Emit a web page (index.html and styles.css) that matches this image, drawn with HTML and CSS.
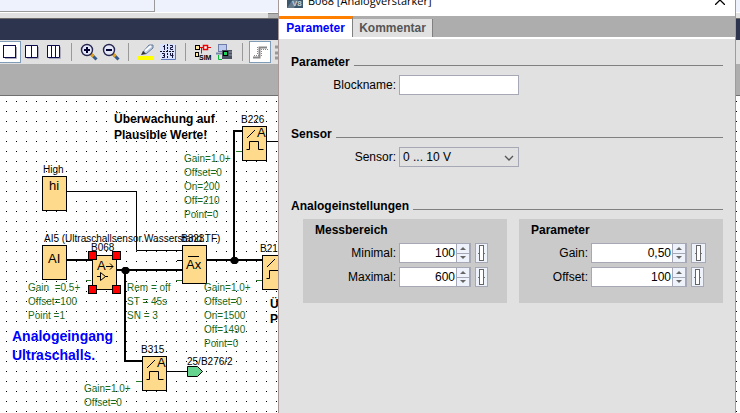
FILE: index.html
```
<!DOCTYPE html>
<html lang="de">
<head>
  <meta charset="UTF-8">
  <title>B068 [Analogverstärker]</title>
  <link rel="stylesheet" href="styles.css">
</head>
<body>
  <div class="app">
    <div class="top-pane"><div class="top-box"></div></div>
    <div class="splitter"><span></span></div>
    <div class="title-strip"></div>
    <div class="toolbar">
      <button class="tool active" aria-label="Ein Fenster">
        <svg width="20" height="20"><path d="M16.5 5v11.5H5" fill="none" stroke="#aab"/><rect x="3.5" y="3.5" width="12" height="12" fill="#fff" stroke="#0b0b4d"/></svg>
      </button>
      <button class="tool" aria-label="Zwei Fenster">
        <svg width="20" height="20"><path d="M16.5 5v11.5H5" fill="none" stroke="#aab"/><path d="M3.5 3.5h12v12h-12zM9.5 3.5v12" fill="#fff" stroke="#0b0b4d"/></svg>
      </button>
      <button class="tool" aria-label="Drei Fenster">
        <svg width="20" height="20"><path d="M16.5 5v11.5H5" fill="none" stroke="#aab"/><path d="M3.5 3.5h12v12h-12zM7.5 3.5v12M11.5 3.5v12" fill="#fff" stroke="#0b0b4d"/></svg>
      </button>
      <span class="sep"></span>
      <button class="tool" aria-label="Vergrößern">
        <svg width="20" height="20"><path d="M12.5 12.5l5 5" stroke="#345a8c" stroke-width="3"/><path d="M11.5 11.5l3 3" stroke="#e0a020" stroke-width="3"/><circle cx="8" cy="8" r="5.5" fill="#e4e8f8" stroke="#25254f" stroke-width="1.4"/><path d="M8 5v6M5 8h6" stroke="#000030" stroke-width="2"/></svg>
      </button>
      <button class="tool" aria-label="Verkleinern">
        <svg width="20" height="20"><path d="M12.5 12.5l5 5" stroke="#345a8c" stroke-width="3"/><path d="M11.5 11.5l3 3" stroke="#e0a020" stroke-width="3"/><circle cx="8" cy="8" r="5.5" fill="#e4e8f8" stroke="#25254f" stroke-width="1.4"/><path d="M5 8h6" stroke="#000030" stroke-width="2"/></svg>
      </button>
      <span class="sep"></span>
      <button class="tool" aria-label="Markieren">
        <svg width="20" height="20"><rect x="2" y="14" width="16" height="4" fill="#ff0"/><path d="M7 10l6-7h4v3l-7 6z" fill="#b9c8e2" stroke="#667b9b"/><path d="M9 9l6-5" stroke="#fff" stroke-width="2"/><path d="M5 13l2-4 3 3z" fill="#333"/></svg>
      </button>
      <button class="tool" aria-label="Seitenlayout">
        <svg width="20" height="20"><rect x="2" y="2" width="15" height="15" fill="#dbe4ff"/><path d="M17.5 3v14.5H3" fill="none" stroke="#5b76b8"/><path d="M9.5 2v15M2 9.5h15" stroke="#112" stroke-dasharray="2 1"/><path d="M6.5 3v5M5 4.5h1M12 3.5h2.5v2H12.5v2H15M4 11.5h2.5v4H4M5 13.5h2M12.5 11v2.5h3M14.5 11v5" fill="none" stroke="#15153c"/></svg>
      </button>
      <span class="sep"></span>
      <button class="tool" aria-label="Simulation">
        <svg width="20" height="20"><path d="M7 5.5h4M15 5.5h3M8.5 5.5v6" fill="none" stroke="#e00"/><rect x="2.5" y="3.5" width="4" height="4" fill="#ffe9a0" stroke="#000"/><rect x="10.5" y="3.5" width="4" height="4" fill="#fff" stroke="#e00" stroke-width="1.5"/><rect x="2.5" y="10.5" width="3" height="4" fill="#ffe9a0" stroke="#000"/><text x="6" y="18" class="sim">SIM</text></svg>
      </button>
      <button class="tool" aria-label="Übertragen">
        <svg width="20" height="20"><rect x="3.5" y="2.5" width="8" height="7" fill="#bccbed" stroke="#6e7ca6"/><path d="M1 11.5h11" stroke="#7684a8" stroke-width="2"/><path d="M3.5 13v4.5H7" fill="none" stroke="#0b3"/><rect x="7" y="8" width="10" height="9" fill="#495161"/><rect x="8.5" y="9.5" width="4" height="4" fill="#1fd45a" stroke="#000"/><path d="M14 10h3M14 13h3" stroke="#909aaa"/></svg>
      </button>
      <span class="sep"></span>
      <button class="tool active" aria-label="Signalverlauf">
        <svg width="20" height="20"><path d="M3 15.5h6.5v-10H17" fill="none" stroke="#888" stroke-width="2"/><path d="M4 13.5h5M11 7.5h7M7.5 5v8M11.5 7v8" stroke="#888" stroke-dasharray="1 1"/></svg>
      </button>
      <button class="tool" aria-label="Liste">
        <svg width="20" height="20"><path d="M3 5h10M3 11h10M3 16h10" stroke="#999" stroke-width="3"/></svg>
      </button>
    </div>
    <div class="ruler"></div>

    <div class="canvas">
      <svg class="diagram" role="img" aria-label="Funktionsplan">
        <g transform="translate(0 -96)">
          <!-- Leitungen -->
          <path class="wire" d="M66 191.5H136.5V250.5H182M177 260.5H182M266 141.5H290M166 371.5H188"/>
          <path class="wire thick" d="M66 260H92M116 270H182M125 270V361H142M206 260H262M234 260V131H242"/>
          <path class="tick" d="M86 280.5H91M236 151.5H242M176 280.5H182M256 280.5H262M136 381.5H142"/>
          <path class="node" d="M123.5 267h4l2 2v3l-2 2h-4l-2-2v-3zM232.5 257h4l2 2v3l-2 2h-4l-2-2v-3z"/>

          <!-- Blöcke -->
          <g class="block">
            <rect x="42.5" y="176.5" width="24" height="34"/>
            <rect x="42.5" y="245.5" width="24" height="34"/>
            <rect x="92.5" y="255.5" width="24" height="34"/>
            <rect x="182.5" y="245.5" width="24" height="38"/>
            <rect x="242.5" y="126.5" width="24" height="34"/>
            <rect x="262.5" y="255.5" width="24" height="34"/>
            <rect x="142.5" y="356.5" width="24" height="34"/>
          </g>
          <g class="symbol">
            <path d="M246.5 149.5h3v-8h9v8h5M247 138l8-8"/>
            <path d="M266.5 278.5h3v-8h9v8h5M267 267l8-8"/>
            <path d="M146.5 379.5h3v-8h9v8h5M147 368l8-8"/>
            <path d="M188 256.5h11"/>
            <path d="M106 266.5h7M110 263.5l3 3-3 3M97 276.5h3M100.5 272.5v8l5-4zM105 276.5h3"/>
          </g>
          <g class="glyph">
            <text x="49" y="190">hi</text>
            <text x="48" y="263">AI</text>
            <text x="97" y="270">A</text>
            <text x="186" y="269">Ax</text>
            <text x="257" y="137">A</text>
            <text x="157" y="367">A</text>
          </g>
          <path class="connector" d="M187.5 366.5h10l5 5-5 5h-10z"/>

          <!-- Beschriftung -->
          <g class="label">
            <text x="43" y="173">High</text>
            <text x="241" y="123">B226</text>
            <text x="44" y="242">AI5 (Ultraschallsensor.Wasserstand.TF)</text>
            <text x="91" y="251">B068</text>
            <text x="181" y="242">B323</text>
            <text x="260" y="252">B21</text>
            <text x="141" y="353">B315</text>
            <text x="187" y="365">25/B276/2</text>
          </g>
          <g class="param">
            <text><tspan x="184" y="162">Gain=1.0+</tspan><tspan x="184" y="176">Offset=0</tspan><tspan x="184" y="190">On=200</tspan><tspan x="184" y="204">Off=210</tspan><tspan x="184" y="218">Point=0</tspan></text>
            <text><tspan x="28" y="291">Gain&#160; =0.5+</tspan><tspan x="28" y="305">Offset=100</tspan><tspan x="28" y="319">Point =1</tspan></text>
            <text><tspan x="127" y="291">Rem = off</tspan><tspan x="127" y="305">ST = 45s</tspan><tspan x="127" y="319">SN = 3</tspan></text>
            <text><tspan x="204" y="291">Gain=1.0+</tspan><tspan x="204" y="305">Offset=0</tspan><tspan x="204" y="319">On=1500</tspan><tspan x="204" y="333">Off=1490</tspan><tspan x="204" y="347">Point=0</tspan></text>
            <text><tspan x="84" y="392">Gain=1.0+</tspan><tspan x="84" y="406">Offset=0</tspan></text>
          </g>
          <text class="note"><tspan x="114" y="123">Überwachung auf</tspan><tspan x="114" y="139">Plausible Werte!</tspan></text>
          <text class="note"><tspan x="270" y="308">Ü</tspan><tspan x="270" y="323">P</tspan></text>
          <text class="note blue"><tspan x="12" y="341">Analogeingang</tspan><tspan x="12" y="360">Ultraschalls.</tspan></text>

          <!-- Auswahl -->
          <g class="handle">
            <rect x="88.5" y="251.5" width="8" height="8"/>
            <rect x="112.5" y="251.5" width="8" height="8"/>
            <rect x="88.5" y="285.5" width="8" height="8"/>
            <rect x="112.5" y="285.5" width="8" height="8"/>
          </g>
        </g>
      </svg>
    </div>
  </div>

  <form class="dialog">
    <div class="dialog-title">
      <svg class="dialog-icon" width="16" height="16"><rect width="16" height="16" fill="#3c566c"/><path d="M0 16L8 4l3 4-4 8z" fill="#64798a"/><text x="5" y="14" class="logo">V8</text></svg>
      <span>B068 [Analogverstärker]</span>
      <button type="button" class="close" aria-label="Schließen">
        <svg width="10" height="10"><path d="M0 0l10 10M10 0L0 10" stroke="#000" stroke-width="1.3"/></svg>
      </button>
    </div>
    <div class="tabs">
      <button type="button" class="tab selected">Parameter</button>
      <button type="button" class="tab">Kommentar</button>
    </div>
    <div class="dialog-body">
      <fieldset>
        <legend>Parameter</legend>
        <div class="row">
          <label for="blockname">Blockname:</label>
          <input type="text" id="blockname" class="field">
        </div>
      </fieldset>
      <fieldset>
        <legend>Sensor</legend>
        <div class="row">
          <label for="sensor">Sensor:</label>
          <div class="select">
            <select id="sensor" class="field"><option>0 ... 10 V</option></select>
            <svg width="10" height="6"><path d="M1 1l4 4 4-4" fill="none" stroke="#555" stroke-width="1.3"/></svg>
          </div>
        </div>
      </fieldset>
      <fieldset>
        <legend>Analogeinstellungen</legend>
        <div class="groups">
          <div class="group">
            <h3>Messbereich</h3>
            <div class="row">
              <label for="minimal">Minimal:</label>
              <div class="spin">
                <input type="text" id="minimal" value="100">
                <div class="steps"><button type="button" class="up" aria-label="Mehr"></button><button type="button" class="down" aria-label="Weniger"></button></div>
              </div>
              <button type="button" class="slider" aria-label="Schieberegler"></button>
            </div>
            <div class="row">
              <label for="maximal">Maximal:</label>
              <div class="spin">
                <input type="text" id="maximal" value="600">
                <div class="steps"><button type="button" class="up" aria-label="Mehr"></button><button type="button" class="down" aria-label="Weniger"></button></div>
              </div>
              <button type="button" class="slider" aria-label="Schieberegler"></button>
            </div>
          </div>
          <div class="group wide">
            <h3>Parameter</h3>
            <div class="row">
              <label for="gain">Gain:</label>
              <div class="spin">
                <input type="text" id="gain" value="0,50">
                <div class="steps"><button type="button" class="up" aria-label="Mehr"></button><button type="button" class="down" aria-label="Weniger"></button></div>
              </div>
              <button type="button" class="slider large" aria-label="Schieberegler"></button>
            </div>
            <div class="row">
              <label for="offset">Offset:</label>
              <div class="spin">
                <input type="text" id="offset" value="100">
                <div class="steps"><button type="button" class="up" aria-label="Mehr"></button><button type="button" class="down" aria-label="Weniger"></button></div>
              </div>
              <button type="button" class="slider" aria-label="Schieberegler"></button>
            </div>
          </div>
        </div>
      </fieldset>
    </div>
  </form>
</body>
</html>
```

FILE: styles.css
```
*, *::before, *::after { box-sizing: border-box; }
body {
  margin: 0;
  overflow: hidden;
  font-family: "Liberation Sans", Arial, sans-serif;
  font-size: 12px;
  color: #000;
}
button, input, select { font: inherit; color: inherit; margin: 0; padding: 0; border: none; border-radius: 0; }

/* Hauptfenster */
.app { display: flex; flex-direction: column; height: 100vh; }
.top-pane { height: 12px; background: #eef2fd; }
.top-box { width: 155px; height: 12px; border: 1px solid #9a9a9a; border-width: 0 1px 1px 0; }
.splitter { height: 6px; background: #e1e1e1; border-top: 1px solid #fff; }
.splitter span { display: block; width: 12px; height: 5px; margin-left: 268px; background: #b4b4b4; border-top: 1px solid #888; }
.title-strip { height: 22px; background: #2c344e; border-top: 1px solid #6b6b6b; }
.toolbar {
  display: flex;
  align-items: center;
  height: 24px;
  margin-left: -1px;
  background: #e1e1e1;
}
.tool {
  flex: none;
  width: 22px;
  height: 22px;
  border: 1px solid transparent;
  background: none;
}
.tool.active { background: #fff; border-color: #7f9db9; }
.tool svg { display: block; }
.sep { flex: none; width: 1px; height: 18px; margin: 0 6px; background: #999; }
.sim { font-size: 7px; font-weight: bold; }
.ruler { height: 32px; background: #aeaeae; border-bottom: 1px solid #707070; }

/* Funktionsplan */
.canvas {
  flex: 1;
  min-height: 0;
  background: conic-gradient(from 270deg at 1px 1px, #000 90deg, #fff 0) 6px 5px / 10px 10px;
}
.diagram { display: block; width: 100%; height: 100%; }
.wire { fill: none; stroke: #000; }
.wire.thick { stroke-width: 2; }
.tick { stroke: #2a7a2a; }
.block rect { fill: #fedb8c; stroke: #000; }
.symbol { fill: none; stroke: #000; }
.glyph { font-size: 13px; }
.connector { fill: #66d48e; stroke: #000; }
.label, .param { font-size: 10px; }
.param { fill: #1c6a1c; }
.note { font-size: 12px; font-weight: bold; }
.note.blue { font-size: 14px; fill: #00f; }
.handle rect { fill: #f00; stroke: #000; }

/* Dialog */
.dialog {
  position: absolute;
  top: -16px;
  bottom: 0;
  left: 278px;
  right: 4px;
  border: 1px solid #a89898;
  border-width: 0 1px;
  background: #e1e1e1;
}
.dialog-title {
  display: flex;
  align-items: center;
  gap: 5px;
  height: 32px;
  padding: 0 10px 0 8px;
  background: #fff;
  font-family: "Open Sans", sans-serif;
  font-size: 11px;
}
.logo { font: bold 8px "Liberation Sans", sans-serif; fill: #c4d0da; }
.close { width: 10px; height: 10px; margin-left: auto; background: none; }
.close svg { display: block; }
.tabs {
  display: flex;
  align-items: flex-end;
  height: 23px;
  background: #adadad;
  border-bottom: 2px solid #fff;
}
.tab {
  height: 18px;
  width: 80px;
  border-right: 1px solid #808080;
  background: #e1e1e1;
  color: #555;
  font-weight: bold;
}
.tab.selected {
  height: 21px;
  width: 74px;
  border-top: 3px solid #ff8000;
  background: #fff;
  color: #00f;
}
.dialog-body { padding: 16px 12px; }
fieldset { margin: 0 0 32px; padding: 0; border: none; min-width: 0; }
legend {
  display: flex;
  width: 100%;
  height: 14px;
  margin-bottom: 6px;
  padding: 0;
  line-height: 14px;
  font-weight: bold;
}
legend::after { content: ""; flex: 1; height: 1px; margin: 10px 0 0 4px; background: #808080; }
.row { display: flex; align-items: center; height: 20px; }
.row label { width: 105px; margin-right: 3px; text-align: right; }
.field {
  display: block;
  width: 120px;
  height: 20px;
  padding: 0 4px;
  border: 1px solid #a6a9b5;
  background: #fff;
}
.select { position: relative; }
.select .field { appearance: none; padding: 0 3px; background: #e1e1e1; }
.select svg { position: absolute; right: 5px; top: 8px; pointer-events: none; }

.groups { display: flex; gap: 12px; margin-left: 12px; }
.group { flex: 1; height: 84px; padding-top: 4px; background: #cacaca; }
.group h3 { margin: 0 0 6px 12px; font-size: 12px; line-height: 14px; }
.group .row { margin-bottom: 4px; }
.group .row label { width: 93px; }
.group.wide .row label { width: 69px; }
.spin { display: flex; width: 72px; height: 20px; border: 1px solid #a6a9b5; background: #fff; }
.wide .spin { width: 96px; }
.spin input { flex: 1; min-width: 0; padding-right: 1px; text-align: right; background: #fff; }
.steps { display: flex; flex-direction: column; width: 14px; border: 1px solid #a6a9b5; border-width: 0 1px; }
.steps button { display: flex; flex: 1; align-items: center; justify-content: center; background: #eef2fb; }
.steps button + button { border-top: 1px solid #a6a9b5; }
.steps button::before { content: ""; border: 3px solid transparent; border-width: 0 3px; }
.steps .up::before { border-bottom: 3px solid #666; }
.steps .down::before { border-top: 3px solid #666; }
.slider {
  display: flex;
  align-items: center;
  justify-content: center;
  width: 13px;
  height: 20px;
  margin-left: 4px;
  border: 1px solid #a6a9b5;
  background: linear-gradient(#777, #777) center / 7px 1px no-repeat #eef2fb;
}
.slider.large { width: 15px; }
.slider::before { content: ""; width: 5px; height: 16px; border: 1px solid #666; background: #fff; }
```
